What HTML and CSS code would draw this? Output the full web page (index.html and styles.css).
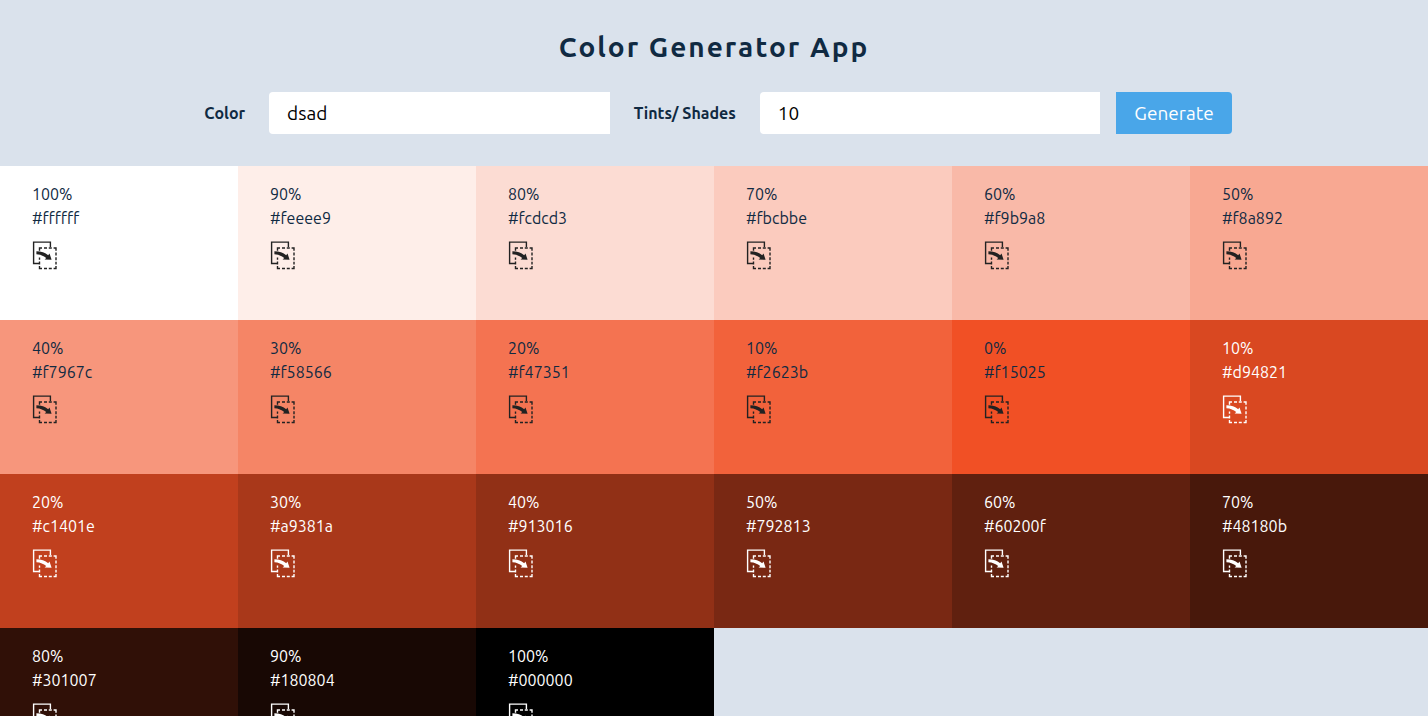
FILE: index.html
```html
<!DOCTYPE html>
<html lang="en">
<head>
<meta charset="utf-8">
<meta name="viewport" content="width=device-width, initial-scale=1">
<title>Color Generator App</title>
<link rel="stylesheet" href="styles.css">
</head>
<body>
<header class="header">
  <h1 class="title">Color Generator App</h1>
  <form class="color-form">
    <label class="form-label" for="color">Color</label>
    <input class="form-input" id="color" type="text" value="dsad">
    <label class="form-label" for="shades">Tints/ Shades</label>
    <input class="form-input" id="shades" type="text" inputmode="numeric" value="10">
    <button class="submit" type="submit">Generate</button>
  </form>
</header>
<main class="colors" id="colors"></main>
<template id="tile">
  <article class="color">
    <p class="percent"></p>
    <p class="hex"></p>
    <button class="copy" type="button" aria-label="Copy color">
      <svg class="copy-icon" viewBox="0 0 26 32" aria-hidden="true">
        <path class="line" d="M7 23.5H1.6V2.1H18.4V7"/>
        <path class="line" d="M7.5 10.8V8H10M12 8h3M16.8 8h3M21.6 8H24V10.8M24 12.6v3M24 17.3v3M24 21.8v2.6M24 26V28.5H21.6M19.8 28.5h-3M15 28.5h-3M10 28.5H7.5V26M7.5 24.4v-3M7.5 19.8v-2.4"/>
        <path class="arrow" d="M4.4 11.2C9.2 11.2 13.3 12.6 16.2 15.2L17.5 13.4L19.6 19.8L12.6 19.6L14.2 17.9C11.6 15.8 8.4 14.4 4.4 14.2Z"/>
      </svg>
    </button>
  </article>
</template>
<script src="app.js"></script>
</body>
</html>
```

FILE: styles.css
```css
*,
*::before,
*::after {
  box-sizing: border-box;
}

html {
  scrollbar-width: none;
}

body {
  margin: 0;
  background: #dae2ec;
  color: #102a42;
  font: 16px/24px Ubuntu, "Noto Sans", sans-serif;
}

.header {
  display: flex;
  flex-direction: column;
  align-items: center;
  gap: 26px;
  padding: 28px 0 32px;
}

.title {
  margin: 0;
  font-size: 28px;
  line-height: 38px;
  font-weight: 700;
  letter-spacing: 2px;
  text-align: center;
}

.color-form {
  display: flex;
  align-items: center;
  width: 72.5%;
  padding-left: 8px;
}

.form-label {
  font-weight: 700;
  white-space: nowrap;
}

.form-input {
  flex: 1;
  min-width: 0;
  height: 42px;
  margin: 0 24px;
  padding: 0 18px;
  border: 0;
  border-radius: 4px 0 0 4px;
  background: #fff;
  color: #000;
  font: inherit;
  font-size: 19px;
}

.form-input:last-of-type {
  margin-right: 16px;
}

.submit {
  height: 42px;
  padding: 0 18px;
  border: 0;
  border-radius: 0 4px 4px 0;
  background: #49a6e9;
  color: #fff;
  font: inherit;
  font-size: 19px;
  cursor: pointer;
}

.colors {
  display: grid;
  grid-template-columns: repeat(auto-fill, minmax(223px, 1fr));
  grid-auto-rows: 1fr;
  min-height: calc(100vh - 100px);
}

.color {
  padding: 16px 32px;
}

.percent,
.hex {
  margin: 0;
}

.copy {
  display: block;
  margin-top: 10px;
  padding: 0;
  border: 0;
  background: none;
  color: #222;
  cursor: pointer;
}

.copy-icon {
  display: block;
  width: 26px;
  height: 32px;
}

.line {
  fill: none;
  stroke: currentColor;
  stroke-width: 1.4;
}

.arrow {
  fill: currentColor;
}

.color-dark,
.color-dark .copy {
  color: #fff;
}
```

FILE: app.js
```js
const tints = ["ffffff", "feeee9", "fcdcd3", "fbcbbe", "f9b9a8", "f8a892", "f7967c", "f58566", "f47351", "f2623b", "f15025"];
const shades = ["d94821", "c1401e", "a9381a", "913016", "792813", "60200f", "48180b", "301007", "180804", "000000"];

const grid = document.getElementById("colors");
const template = document.getElementById("tile");

function addTile(hex, percent, dark) {
  const tile = template.content.firstElementChild.cloneNode(true);
  tile.style.backgroundColor = `#${hex}`;
  tile.classList.toggle("color-dark", dark);
  tile.querySelector(".percent").textContent = `${percent}%`;
  tile.querySelector(".hex").textContent = `#${hex}`;
  grid.append(tile);
}

tints.forEach((hex, i) => addTile(hex, 100 - i * 10, false));
shades.forEach((hex, i) => addTile(hex, (i + 1) * 10, true));

document.querySelector(".color-form").addEventListener("submit", (event) => event.preventDefault());
```
